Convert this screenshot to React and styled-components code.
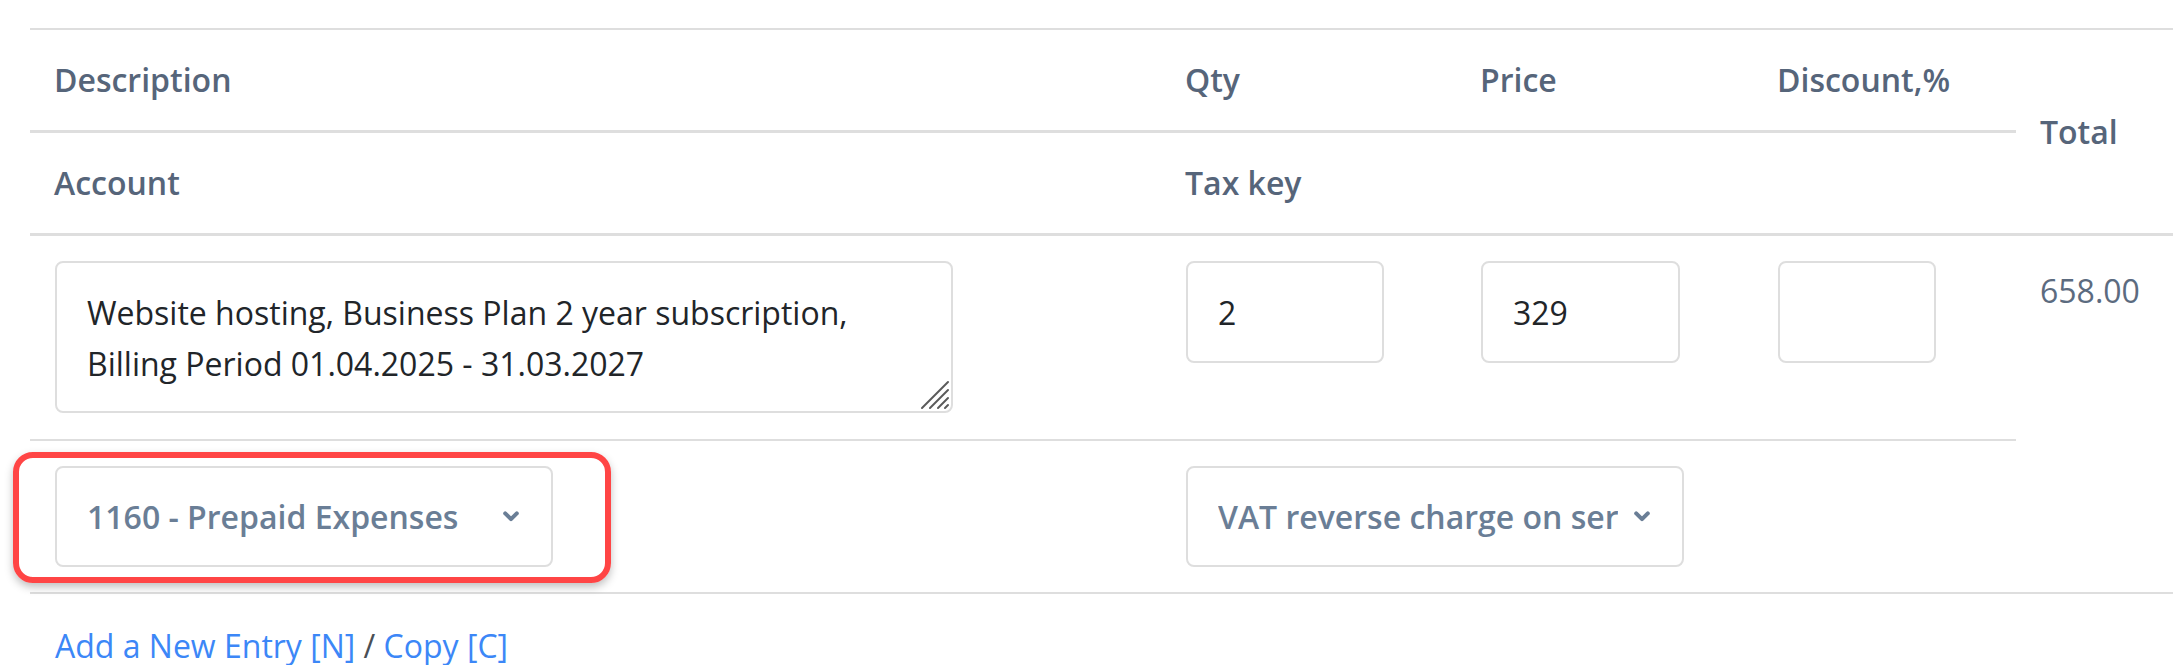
import styled, { createGlobalStyle } from "styled-components";

const GlobalStyle = createGlobalStyle`
  html, body {
    margin: 0;
    padding: 0;
    background: #fff;
    overflow: hidden;
  }
  body {
    font-family: "Open Sans", "Noto Sans", sans-serif;
    font-size: 32px;
    color: #212529;
  }
  * {
    box-sizing: border-box;
  }
`;

const Page = styled.div`
  padding: 28px 0 0 30px;
`;

const Table = styled.table`
  width: 2143px;
  table-layout: fixed;
  border-collapse: separate;
  border-spacing: 0;
`;

const Col = styled.col`
  width: ${(p) => (p.$w ? `${p.$w}px` : "auto")};
`;

const Th = styled.th`
  text-align: left;
  vertical-align: middle;
  font-weight: 600;
  color: #56657a;
  line-height: 44px;
  padding: 28px 24px;
  border-top: ${(p) => (p.$top ? "2px solid #dedede" : "none")};
  border-bottom: 3px solid #dedede;
  white-space: nowrap;
`;

const Td = styled.td`
  vertical-align: top;
  padding: ${(p) => (p.$first ? "25px 25px 26px" : "25px")};
  border-bottom: 2px solid #dedede;
`;

const TotalCell = styled.td`
  vertical-align: top;
  padding: 33px 24px 0;
  border-bottom: 2px solid #dedede;
  color: #5c6b7f;
  line-height: 44px;
`;

const AreaWrap = styled.div`
  position: relative;
  width: 898px;
`;

const TextArea = styled.textarea`
  display: block;
  width: 898px;
  height: 152px;
  padding: 24px 30px;
  border: 2px solid #dedede;
  border-radius: 8px;
  font-family: inherit;
  font-size: 32px;
  line-height: 51px;
  color: #212529;
  resize: none;
  overflow: hidden;
  outline: none;
`;

const Grip = styled.svg`
  position: absolute;
  right: 3px;
  bottom: 3px;
  pointer-events: none;
`;

const NumInput = styled.input`
  display: block;
  width: ${(p) => p.$w}px;
  height: 102px;
  padding: 0 30px;
  border: 2px solid #dedede;
  border-radius: 8px;
  font-family: inherit;
  font-size: 32px;
  color: #212529;
  outline: none;
`;

const Highlight = styled.div`
  position: relative;
  display: inline-block;
  vertical-align: top;
  &::after {
    content: "";
    position: absolute;
    top: -14px;
    left: -42px;
    right: -58px;
    bottom: -16px;
    border: 6px solid #ff4545;
    border-radius: 20px;
    box-shadow: 0 4px 8px rgba(0, 0, 0, 0.25);
    pointer-events: none;
  }
`;

const SelectBox = styled.div`
  display: flex;
  align-items: center;
  gap: 16px;
  width: 498px;
  height: 101px;
  padding: 0 32px 0 30px;
  border: 2px solid #dedede;
  border-radius: 8px;
  color: #6a7e96;
  font-weight: 600;
  background: #fff;
`;

const SelectText = styled.span`
  flex: 1;
  overflow: hidden;
  white-space: nowrap;
  line-height: 44px;
`;

const Actions = styled.div`
  margin-top: 30px;
  padding-left: 25px;
  line-height: 44px;
  color: #4a4f55;
`;

const Link = styled.a`
  color: #3c87f7;
  text-decoration: none;
  cursor: pointer;
`;

const Chevron = () => (
  <svg width="16" height="11" viewBox="0 0 16 11">
    <polyline
      points="2.2,2.4 8,8.2 13.8,2.4"
      fill="none"
      stroke="currentColor"
      strokeWidth="4"
      strokeLinecap="round"
      strokeLinejoin="round"
    />
  </svg>
);

const ResizeGrip = () => (
  <Grip width="30" height="30" viewBox="0 0 30 30">
    <g stroke="#5a5a5a" strokeWidth="2" strokeLinecap="round">
      <line x1="2" y1="28" x2="28" y2="2" />
      <line x1="10" y1="28" x2="28" y2="10" />
      <line x1="18" y1="28" x2="28" y2="18" />
      <line x1="25" y1="28" x2="28" y2="25" />
    </g>
  </Grip>
);

const Select = ({ children }) => (
  <SelectBox>
    <SelectText>{children}</SelectText>
    <Chevron />
  </SelectBox>
);

const App = () => {
  return (
    <Page>
      <GlobalStyle />
      <Table>
        <colgroup>
          <Col $w={1131} />
          <Col $w={295} />
          <Col $w={297} />
          <Col $w={263} />
          <Col />
        </colgroup>
        <thead>
          <tr>
            <Th $top>Description</Th>
            <Th $top>Qty</Th>
            <Th $top>Price</Th>
            <Th $top>Discount,%</Th>
            <Th $top rowSpan={2}>
              Total
            </Th>
          </tr>
          <tr>
            <Th>Account</Th>
            <Th colSpan={3}>Tax key</Th>
          </tr>
        </thead>
        <tbody>
          <tr>
            <Td $first>
              <AreaWrap>
                <TextArea
                  defaultValue={
                    "Website hosting, Business Plan 2 year subscription,\nBilling Period 01.04.2025 - 31.03.2027"
                  }
                />
                <ResizeGrip />
              </AreaWrap>
            </Td>
            <Td $first>
              <NumInput $w={198} defaultValue="2" />
            </Td>
            <Td $first>
              <NumInput $w={199} defaultValue="329" />
            </Td>
            <Td $first>
              <NumInput $w={158} defaultValue="" />
            </Td>
            <TotalCell rowSpan={2}>658.00</TotalCell>
          </tr>
          <tr>
            <Td>
              <Highlight>
                <Select>1160 - Prepaid Expenses</Select>
              </Highlight>
            </Td>
            <Td colSpan={3}>
              <Select>VAT reverse charge on ser</Select>
            </Td>
          </tr>
        </tbody>
      </Table>
      <Actions>
        <Link>Add a New Entry [N]</Link> / <Link>Copy [C]</Link>
      </Actions>
    </Page>
  );
};

export default App;
